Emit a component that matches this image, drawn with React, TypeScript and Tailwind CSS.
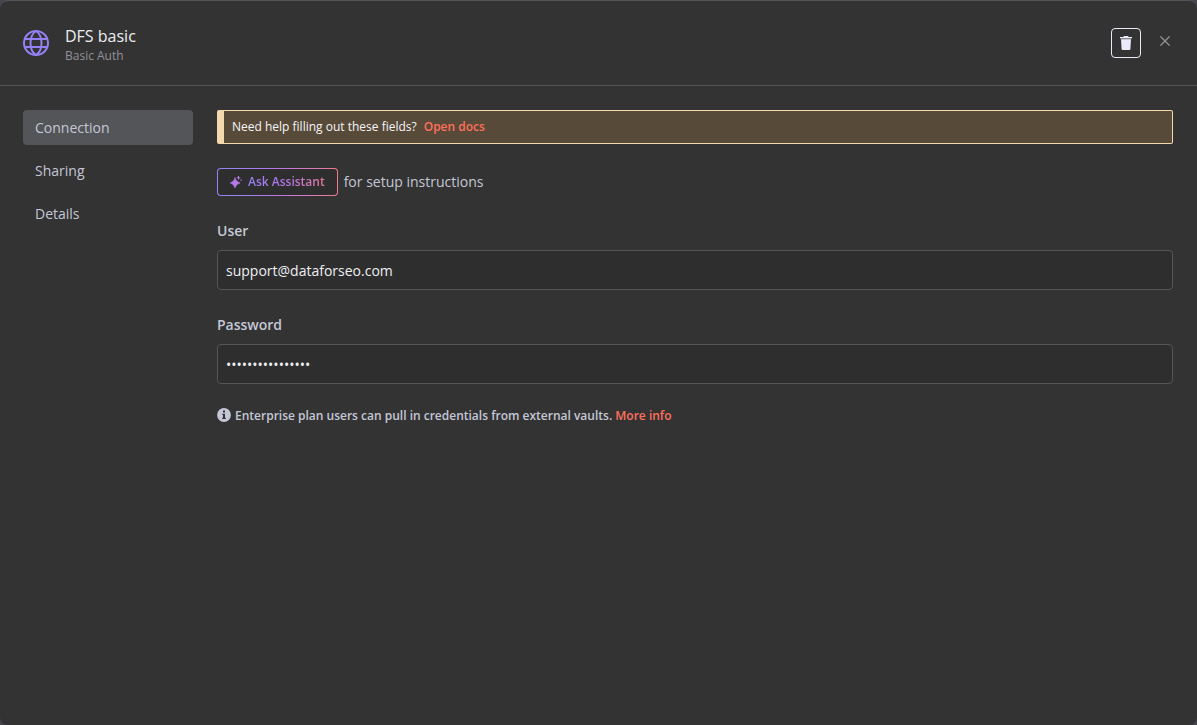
import React, { useState } from 'react';

const tabs = ['Connection', 'Sharing', 'Details'];

const GlobeIcon = () => (
    <svg className="w-[26px] h-[26px] shrink-0" viewBox="0 0 26 26" fill="none" stroke="#9580f5" strokeWidth="2" aria-hidden="true">
        <circle cx="13" cy="13" r="12" />
        <path d="M13 1C9 3.500 7.500 8 7.500 13S9 22.500 13 25c4-2.500 5.500-7 5.500-12S17 3.500 13 1z" />
        <path d="M1.800 9h22.400M1.800 17h22.400" />
    </svg>
);

const TrashIcon = () => (
    <svg className="w-[14px] h-[14px]" viewBox="0 0 14 14" fill="#e9ebf8" aria-hidden="true">
        <path d="M1 1h3.400L5 0h4l.6 1H13v1.200H1z" />
        <path d="M1.600 2.200h10.800v1H1.600z" fill="#94969e" />
        <path d="M2 3.200h10l-.6 9.800a1 1 0 0 1-1 1H3.600a1 1 0 0 1-1-1z" />
    </svg>
);

const CloseIcon = () => (
    <svg className="w-[10px] h-[10px]" viewBox="0 0 10 10" fill="none" stroke="#909298" strokeWidth="1.300" aria-hidden="true">
        <path d="M.4.4l9.200 9.200M9.600.4L.4 9.600" />
    </svg>
);

const SparkleIcon = () => (
    <svg className="w-3 h-3" viewBox="0 0 12 12" aria-hidden="true">
        <defs>
            <linearGradient id="sparkle" x1="0" y1="0" x2="1" y2="0">
                <stop offset="0" stopColor="#a77af0" />
                <stop offset="1" stopColor="#c078dc" />
            </linearGradient>
        </defs>
        <g fill="url(#sparkle)">
            <path d="M5 1.500c.9 3.100 2 4.400 5.200 5.500C7 8.100 5.900 9.400 5 12.500 4.100 9.400 3 8.100-.2 7 3 5.900 4.100 4.600 5 1.500z" stroke="url(#sparkle)" strokeWidth=".5" />
            <path d="M8 0h1v1.200h1.200v1H9v1.200H8V2.200H6.800v-1H8zM10.500 3.500h1.200v1.200h-1.200z" />
        </g>
    </svg>
);

const InfoIcon = () => (
    <svg className="w-[14px] h-[14px] shrink-0" viewBox="0 0 14 14" aria-hidden="true">
        <circle cx="7" cy="7" r="6.900" fill="#c5c7d6" />
        <path d="M6 2.500h2v2H6zM5.300 5.700H8v4h.8V11H5.200V9.700H6V7h-.7z" fill="#333" />
    </svg>
);

const App: React.FC = () => {
    const [activeTab, setActiveTab] = useState('Connection');
    const [user, setUser] = useState('support@dataforseo.com');
    const [password, setPassword] = useState('abcdefghijklmnop');

    const labelClass = "block text-sm leading-5 font-semibold text-[#c5c7d6] mb-[9px]";
    const inputClass = "block w-full h-10 px-2 rounded border border-[#535558] bg-[#2e2e2e] text-sm text-[#eeeef2] outline-none";

    return (
        <div className="min-h-screen bg-[#45444d] font-['Open_Sans',sans-serif]">
            <div className="min-h-screen flex flex-col rounded-lg border-t border-[#535558] bg-[#333333]">
                <header className="flex items-center h-[85px] pl-[23px] pr-6 border-b border-[#535558]">
                    <GlobeIcon />
                    <div className="ml-4 pt-[2px] flex-1">
                        <h1 className="text-base leading-6 text-[#eeeef2]">DFS basic</h1>
                        <p className="text-xs leading-4 text-[#909298]">Basic Auth</p>
                    </div>
                    <button type="button" aria-label="Delete credential" className="w-[30px] h-[30px] flex items-center justify-center rounded border border-[#e9ebf8]">
                        <TrashIcon />
                    </button>
                    <button type="button" aria-label="Close" className="ml-4 mb-1 w-4 h-4 flex items-center justify-center">
                        <CloseIcon />
                    </button>
                </header>

                <div className="flex flex-1 px-6 pt-6 gap-6">
                    <nav className="w-[170px] shrink-0 -ml-px flex flex-col gap-2">
                        {tabs.map(tab => (
                            <button
                                key={tab}
                                type="button"
                                onClick={() => setActiveTab(tab)}
                                className={`h-[35px] px-3 rounded text-left text-sm text-[#c5c7d6] ${activeTab === tab ? 'bg-[#535558]' : ''}`}
                            >
                                {tab}
                            </button>
                        ))}
                    </nav>

                    <main className="flex-1 min-w-0">
                        <div className="flex items-center h-[34px] pl-2 rounded-xs border border-l-[7px] border-[#f5d9ae] bg-[#584a38] text-xs text-[#f5f5f8]">
                            <span>Need help filling out these fields?</span>
                            <a href="#docs" className="ml-[7px] font-semibold text-[#ff6f5c]">Open docs</a>
                        </div>

                        <div className="mt-6 flex items-center gap-[6px] text-sm text-[#c5c7d6]">
                            <button type="button" className="h-7 p-px rounded bg-linear-to-r from-[#8f87f7] via-[#b876e8] to-[#ee7b8f]">
                                <span className="flex items-center gap-[6px] h-full px-3 rounded-[3px] bg-[#2e2e2e] text-xs font-semibold">
                                    <SparkleIcon />
                                    <span className="bg-linear-to-r from-[#9580f5] via-[#b876e8] to-[#e6799a] bg-clip-text text-transparent">Ask Assistant</span>
                                </span>
                            </button>
                            <span>for setup instructions</span>
                        </div>

                        <div className="mt-[25px]">
                            <label htmlFor="user" className={labelClass}>User</label>
                            <input id="user" type="text" value={user} onChange={e => setUser(e.target.value)} className={inputClass} />
                        </div>

                        <div className="mt-[25px]">
                            <label htmlFor="password" className={labelClass}>Password</label>
                            <input id="password" type="password" value={password} onChange={e => setPassword(e.target.value)} className={inputClass} />
                        </div>

                        <p className="mt-6 flex items-start gap-1 text-xs leading-4 font-semibold text-[#c5c7d6]">
                            <InfoIcon />
                            <span>
                                Enterprise plan users can pull in credentials from external vaults.{' '}
                                <a href="#vaults" className="text-[#ff6f5c]">More info</a>
                            </span>
                        </p>
                    </main>
                </div>
            </div>
        </div>
    );
};

export default App;
